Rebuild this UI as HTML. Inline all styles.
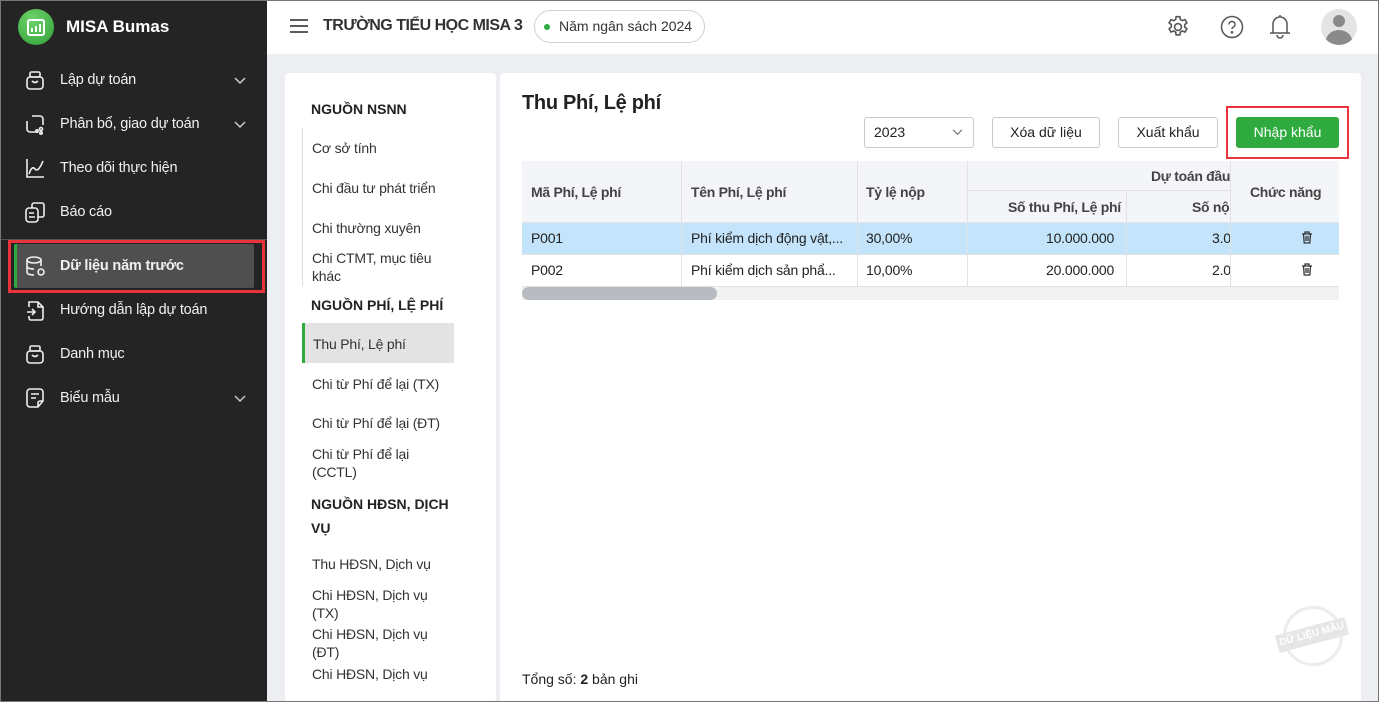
<!DOCTYPE html>
<html><head><meta charset="utf-8"><style>
*{box-sizing:border-box;margin:0;padding:0}
body{width:1379px;height:702px;overflow:hidden;font-family:"Liberation Sans",sans-serif;background:#eceef1;position:relative;color:#212121;font-size:14px}
.a{position:absolute}
#sb{left:0;top:0;width:267px;height:702px;background:#242424;color:#fff}
.mi{position:absolute;left:60px;font-size:14.5px;color:#f0f0f0;white-space:nowrap;letter-spacing:-0.2px}
.ic{position:absolute;left:24px;width:22px;height:22px}
.chev{position:absolute;left:234px;width:12px;height:8px}
#hd{left:267px;top:0;width:1112px;height:54px;background:#fff}
.ln{position:absolute;left:312px;font-size:14px;color:#333;line-height:18px;letter-spacing:-0.2px}
.sec{position:absolute;left:311px;font-size:14px;font-weight:bold;color:#222}
.btn{position:absolute;top:117px;height:31px;border:1px solid #c9c9c9;border-radius:3px;background:#fff;font-size:14px;text-align:center;line-height:29px;color:#222}
.c{position:absolute;font-size:14px;color:#222;white-space:nowrap;letter-spacing:-0.2px}
.hc{position:absolute;font-size:14px;font-weight:bold;color:#444;white-space:nowrap;letter-spacing:-0.3px}
.vl{position:absolute;width:1px;background:#e2e2e2}
.hl{position:absolute;height:1px;background:#e2e2e2}
</style></head><body>
<div id="sb" class="a">
 <div class="a" style="left:18px;top:9px;width:36px;height:36px;border-radius:50%;background:radial-gradient(circle at 40% 30%,#6fd36a,#2f9f3a)"></div>
 <svg class="a" style="left:26px;top:17px" width="20" height="20" viewBox="0 0 20 20" fill="none" stroke="#fff" stroke-width="2"><rect x="2" y="3" width="16" height="15" rx="2"/><path d="M6 15v-4M10 15v-6M14 15v-8"/></svg>
 <div class="a" style="left:66px;top:17px;font-size:17px;font-weight:bold;color:#fff">MISA Bumas</div>
 <svg class="ic" style="top:69px" viewBox="0 0 22 22" fill="none" stroke="#eee" stroke-width="1.6"><rect x="3" y="8" width="16" height="12" rx="3"/><rect x="6" y="3" width="10" height="5" rx="1.5"/><path d="M8 12q3 3 6 0"/></svg>
 <div class="mi" style="top:72px">Lập dự toán</div>
 <svg class="chev" style="top:77px" viewBox="0 0 12 8" fill="none" stroke="#ccc" stroke-width="1.5"><path d="M1 1l5 5 5-5"/></svg>
 <svg class="ic" style="top:113px" viewBox="0 0 22 22" fill="none" stroke="#eee" stroke-width="1.6"><path d="M8 3h8a3 3 0 0 1 3 3v6M14 19H6a3 3 0 0 1-3-3V8"/><circle cx="17" cy="16" r="1.5"/><circle cx="13" cy="18" r="1.2"/><circle cx="17" cy="20" r="1.2"/></svg>
 <div class="mi" style="top:116px">Phân bổ, giao dự toán</div>
 <svg class="chev" style="top:121px" viewBox="0 0 12 8" fill="none" stroke="#ccc" stroke-width="1.5"><path d="M1 1l5 5 5-5"/></svg>
 <svg class="ic" style="top:157px" viewBox="0 0 22 22" fill="none" stroke="#eee" stroke-width="1.6"><path d="M3 2v18h17M5 17q3-9 6-5t8-8"/></svg>
 <div class="mi" style="top:160px">Theo dõi thực hiện</div>
 <svg class="ic" style="top:201px" viewBox="0 0 22 22" fill="none" stroke="#eee" stroke-width="1.6"><rect x="2" y="7" width="12" height="14" rx="3"/><path d="M8 7V4a2 2 0 0 1 2-2h8a2 2 0 0 1 2 2v10a2 2 0 0 1-2 2h-4M5 12h5M5 16h6"/></svg>
 <div class="mi" style="top:204px">Báo cáo</div>
 <div class="a" style="left:0;top:239px;width:267px;height:1px;background:#555"></div>
 <div class="a" style="left:14px;top:244px;width:240px;height:44px;background:#4f4f4f;border-left:3px solid #2eaa3e;border-radius:2px"></div>
 <div class="a" style="left:8px;top:240px;width:257px;height:53px;border:3px solid #e8343a"></div>
 <svg class="ic" style="top:255px" viewBox="0 0 22 22" fill="none" stroke="#eee" stroke-width="1.6"><ellipse cx="10" cy="5" rx="7" ry="3"/><path d="M3 5v12c0 2 3 3 7 3M17 5v6M3 11c0 2 3 3 7 3"/><circle cx="17" cy="17" r="3"/></svg>
 <div class="mi" style="top:258px;font-weight:bold">Dữ liệu năm trước</div>
 <svg class="ic" style="top:299px" viewBox="0 0 22 22" fill="none" stroke="#eee" stroke-width="1.6"><path d="M5 8V3h9l5 5v11a2 2 0 0 1-2 2H7a2 2 0 0 1-2-2v-2M14 3v5h5M3 13h8M8 10l3 3-3 3"/></svg>
 <div class="mi" style="top:302px">Hướng dẫn lập dự toán</div>
 <svg class="ic" style="top:343px" viewBox="0 0 22 22" fill="none" stroke="#eee" stroke-width="1.6"><rect x="3" y="8" width="16" height="12" rx="3"/><rect x="6" y="3" width="10" height="5" rx="1.5"/><path d="M8 12q3 3 6 0"/></svg>
 <div class="mi" style="top:346px">Danh mục</div>
 <svg class="ic" style="top:387px" viewBox="0 0 22 22" fill="none" stroke="#eee" stroke-width="1.6"><path d="M14 20H6a3 3 0 0 1-3-3V5a3 3 0 0 1 3-3h10a3 3 0 0 1 3 3v9zM14 20v-4a2 2 0 0 1 2-2h3M7 7h8M7 11h5"/></svg>
 <div class="mi" style="top:390px">Biểu mẫu</div>
 <svg class="chev" style="top:395px" viewBox="0 0 12 8" fill="none" stroke="#ccc" stroke-width="1.5"><path d="M1 1l5 5 5-5"/></svg>
</div>

<div id="hd" class="a">
 <svg class="a" style="left:23px;top:19px" width="18" height="14" viewBox="0 0 18 14" stroke="#444" stroke-width="1.8"><path d="M0 1h18M0 7h18M0 13h18"/></svg>
 <div class="a" style="left:56px;top:17px;font-size:16px;font-weight:bold;color:#333;letter-spacing:-0.5px">TRƯỜNG TIỂU HỌC MISA 3</div>
 <div class="a" style="left:267px;top:10px;width:171px;height:33px;border:1px solid #d0d0d0;border-radius:17px;font-size:14px;color:#333;line-height:31px;padding-left:24px">Năm ngân sách 2024</div>
 <div class="a" style="left:277px;top:24px;width:6px;height:6px;border-radius:50%;background:#2eaa3e"></div>
 <svg class="a" style="left:898px;top:14px" width="26" height="26" viewBox="0 0 24 24" fill="none" stroke="#555" stroke-width="1.5"><circle cx="12" cy="12" r="3.2"/><path d="M10.3 2.5h3.4l.5 2.6 1.8 1 2.5-.9 1.7 2.9-2 1.7v2.2l2 1.7-1.7 2.9-2.5-.9-1.8 1-.5 2.6h-3.4l-.5-2.6-1.8-1-2.5.9-1.7-2.9 2-1.7v-2.2l-2-1.7 1.7-2.9 2.5.9 1.8-1z"/></svg>
 <svg class="a" style="left:953px;top:15px" width="24" height="24" viewBox="0 0 24 24" fill="none" stroke="#555" stroke-width="1.5"><circle cx="12" cy="12" r="10.5"/><path d="M9 9.5a3 3 0 1 1 4 2.8c-.8.4-1 .9-1 1.7"/><circle cx="12" cy="17.3" r=".6" fill="#555"/></svg>
 <svg class="a" style="left:1001px;top:13px" width="24" height="26" viewBox="0 0 24 26" fill="none" stroke="#555" stroke-width="1.5"><path d="M12 2v2M5 20V11a7 7 0 0 1 14 0v9M2 20h20M9 22a3 3 0 0 0 6 0"/></svg>
 <div class="a" style="left:1054px;top:9px;width:36px;height:36px;border-radius:50%;background:#e4e4e4;overflow:hidden">
  <div class="a" style="left:12px;top:6px;width:12px;height:12px;border-radius:50%;background:#8a8a8a"></div>
  <div class="a" style="left:5px;top:21px;width:26px;height:22px;border-radius:50%;background:#8a8a8a"></div>
 </div>
</div>

<div class="a" style="left:285px;top:73px;width:211px;height:629px;background:#fff;border-radius:4px"></div>
<div class="sec" style="top:101px">NGUỒN NSNN</div>
<div class="a" style="left:302px;top:128px;width:1px;height:158px;background:#ddd"></div>
<div class="ln" style="top:139px">Cơ sở tính</div>
<div class="ln" style="top:179px">Chi đầu tư phát triển</div>
<div class="ln" style="top:219px">Chi thường xuyên</div>
<div class="ln" style="top:249px">Chi CTMT, mục tiêu<br>khác</div>
<div class="sec" style="top:297px">NGUỒN PHÍ, LỆ PHÍ</div>
<div class="a" style="left:302px;top:323px;width:152px;height:40px;background:#e3e3e3;border-left:3px solid #2eaa3e"></div>
<div class="ln" style="top:335px;left:313px">Thu Phí, Lệ phí</div>
<div class="ln" style="top:375px">Chi từ Phí để lại (TX)</div>
<div class="ln" style="top:414px">Chi từ Phí để lại (ĐT)</div>
<div class="ln" style="top:445px">Chi từ Phí để lại<br>(CCTL)</div>
<div class="sec" style="top:492px;line-height:24px">NGUỒN HĐSN, DỊCH<br>VỤ</div>
<div class="ln" style="top:555px">Thu HĐSN, Dịch vụ</div>
<div class="ln" style="top:586px">Chi HĐSN, Dịch vụ<br>(TX)</div>
<div class="ln" style="top:625px">Chi HĐSN, Dịch vụ<br>(ĐT)</div>
<div class="ln" style="top:665px">Chi HĐSN, Dịch vụ</div>

<div class="a" style="left:500px;top:73px;width:861px;height:629px;background:#fff;border-radius:4px"></div>
<div class="a" style="left:522px;top:92px;font-size:20px;font-weight:bold;color:#222;letter-spacing:-0.3px">Thu Phí, Lệ phí</div>
<div class="btn" style="left:864px;width:110px;text-align:left;padding-left:9px">2023</div>
<svg class="a" style="left:952px;top:129px" width="11" height="7" viewBox="0 0 12 8" fill="none" stroke="#666" stroke-width="1.3"><path d="M1 1l5 5 5-5"/></svg>
<div class="btn" style="left:992px;width:108px">Xóa dữ liệu</div>
<div class="btn" style="left:1118px;width:100px">Xuất khẩu</div>
<div class="btn" style="left:1236px;width:103px;background:#2eaa3e;border-color:#2eaa3e;color:#fff">Nhập khẩu</div>
<div class="a" style="left:1226px;top:106px;width:123px;height:53px;border:2px solid #e8343a"></div>

<div class="a" style="left:522px;top:161px;width:817px;height:62px;background:#f4f5f8"></div>
<div class="a" style="left:522px;top:223px;width:817px;height:32px;background:#c4e4fb"></div>
<div class="hl" style="left:522px;top:222px;width:817px"></div>
<div class="hl" style="left:522px;top:254px;width:817px"></div>
<div class="hl" style="left:522px;top:286px;width:817px"></div>
<div class="hl" style="left:967px;top:190px;width:263px"></div>
<div class="vl" style="left:681px;top:161px;height:125px"></div>
<div class="vl" style="left:857px;top:161px;height:125px"></div>
<div class="vl" style="left:967px;top:161px;height:125px"></div>
<div class="vl" style="left:1126px;top:191px;height:95px"></div>
<div class="vl" style="left:1230px;top:161px;height:125px"></div>
<div class="hc" style="left:531px;top:184px">Mã Phí, Lệ phí</div>
<div class="hc" style="left:691px;top:184px">Tên Phí, Lệ phí</div>
<div class="hc" style="left:866px;top:184px">Tỷ lệ nộp</div>
<div class="hc" style="left:1151px;top:168px;width:79px;overflow:hidden">Dự toán đầu</div>
<div class="hc" style="left:1008px;top:199px">Số thu Phí, Lệ phí</div>
<div class="hc" style="left:1192px;top:199px;width:38px;overflow:hidden">Số nộ</div>
<div class="hc" style="left:1250px;top:184px">Chức năng</div>
<div class="c" style="left:531px;top:230px">P001</div>
<div class="c" style="left:691px;top:230px">Phí kiểm dịch động vật,...</div>
<div class="c" style="left:866px;top:230px">30,00%</div>
<div class="c" style="left:1046px;top:230px">10.000.000</div>
<div class="c" style="left:1212px;top:230px;width:18px;overflow:hidden">3.0</div>
<div class="c" style="left:531px;top:262px">P002</div>
<div class="c" style="left:691px;top:262px">Phí kiểm dịch sản phẩ...</div>
<div class="c" style="left:866px;top:262px">10,00%</div>
<div class="c" style="left:1046px;top:262px">20.000.000</div>
<div class="c" style="left:1212px;top:262px;width:18px;overflow:hidden">2.0</div>
<svg class="a" style="left:1301px;top:231px" width="12" height="13" viewBox="0 0 12 13" fill="none" stroke="#333" stroke-width="1.3"><path d="M1 3h10M4 3V1h4v2M2.5 3l.7 9h5.6l.7-9M5 5v5M7 5v5"/></svg>
<svg class="a" style="left:1301px;top:263px" width="12" height="13" viewBox="0 0 12 13" fill="none" stroke="#333" stroke-width="1.3"><path d="M1 3h10M4 3V1h4v2M2.5 3l.7 9h5.6l.7-9M5 5v5M7 5v5"/></svg>
<div class="a" style="left:522px;top:287px;width:817px;height:13px;background:#f2f2f2"></div>
<div class="a" style="left:522px;top:287px;width:195px;height:13px;background:#b8bcc2;border-radius:7px"></div>
<div class="a" style="left:522px;top:671px;font-size:14px;color:#222">Tổng số: <b>2</b> bản ghi</div>

<div class="a" style="left:1283px;top:606px;width:60px;height:60px;border-radius:50%;border:3px solid #ececec"></div>
<div class="a" style="left:1276px;top:626px;width:72px;height:18px;background:#e6e6e6;transform:rotate(-15deg);color:#fff;font-size:10px;font-weight:bold;text-align:center;line-height:18px">DỮ LIỆU MẪU</div>
<div class="a" style="left:0;top:0;width:1379px;height:702px;border:1px solid #777;pointer-events:none"></div>
</body></html>
